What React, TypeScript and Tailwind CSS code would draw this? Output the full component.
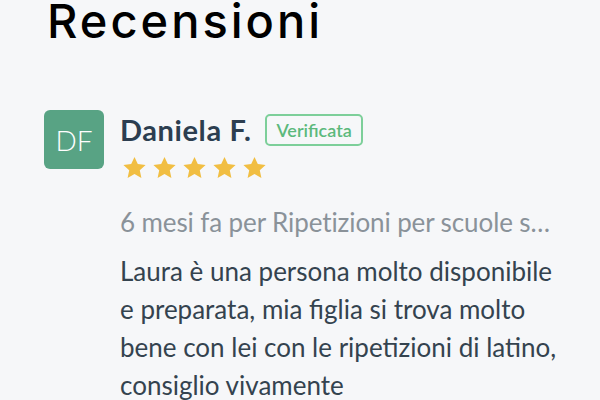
import React from 'react';

const Star: React.FC = () => (
  <svg viewBox="0 0 24 24" className="w-[27px] h-[26px]" fill="#f1be42">
    <path d="M12 1.8l3.05 6.6 7.2.8-5.37 4.9 1.5 7.1L12 17.6l-6.38 3.6 1.5-7.1L1.75 9.2l7.2-.8z" />
  </svg>
);

export default function App() {
  return (
    <div className="w-[600px] h-[400px] overflow-hidden bg-[#f6f7f9]">
      <h1
        className="pl-[47px] text-[47px] leading-[42px] font-medium text-black tracking-[3px]"
        style={{ fontFamily: 'Inter, "Noto Sans", sans-serif' }}
      >
        Recensioni
      </h1>

      <div
        className="flex gap-4 pl-[44px] pt-[68px] pr-[20px]"
        style={{ fontFamily: 'Lato, "Noto Sans", sans-serif' }}
      >
        <div className="w-[60px] h-[59px] shrink-0 rounded-[6px] bg-[#58a384] flex items-center justify-center text-white text-[28px] font-light">
          DF
        </div>

        <div className="flex flex-col min-w-0">
          <div className="flex items-center gap-[14px] pt-[3px]">
            <span className="text-[29px] leading-[34px] font-bold text-[#2c3e50] tracking-[0.6px]">Daniela F.</span>
            <span className="border-2 border-[#7dcf9a] rounded-[5px] px-[9px] h-[32px] flex items-center text-[18px] font-semibold text-[#5cb97c]">
              Verificata
            </span>
          </div>
          <div className="flex gap-[3px] mt-[8px] ml-[1px]">
            <Star />
            <Star />
            <Star />
            <Star />
            <Star />
          </div>
          <p className="mt-[25px] text-[26px] leading-[32px] text-[#8a9299] whitespace-nowrap tracking-[-0.1px]">
            6 mesi fa per Ripetizioni per scuole s…
          </p>
          <p className="mt-[14px] text-[26px] leading-[38px] text-[#34434f] w-[445px]">
            Laura è una persona molto disponibile e preparata, mia figlia si trova molto bene con lei con le ripetizioni di latino, consiglio vivamente
          </p>
        </div>
      </div>
    </div>
  );
}
